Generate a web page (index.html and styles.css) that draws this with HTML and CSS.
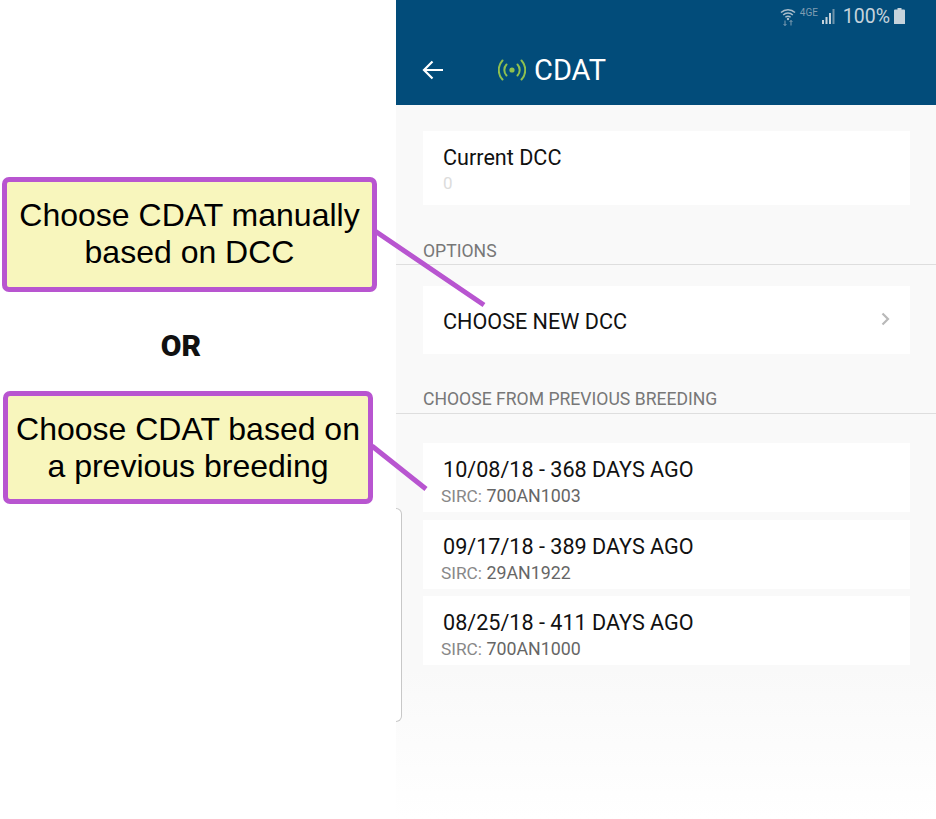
FILE: index.html

```html
<!doctype html>
<html>
<head>
    <title>CDAT</title>
    <link rel="stylesheet" href="styles.css">
</head>

<body>

<div class="page">
    <div class="notes">
        <div class="callout callout_first">Choose CDAT manually<br>based on DCC</div>
        <div class="or_label">OR</div>
        <div class="callout callout_second">Choose CDAT based on<br>a previous breeding</div>
    </div>

    <div class="phone">
        <div class="header">
            <div class="status_bar">
                <svg class="status_wifi" viewBox="0 0 16 20" width="16" height="20">
                    <path d="M1 6.500a10 10 0 0 1 14 0M3.200 9a7 7 0 0 1 9.600 0M5.400 11.300a4 4 0 0 1 5.200 0" fill="none" stroke="#a9bdcb" stroke-width="1.500"/>
                    <circle cx="8" cy="13" r="1.200" fill="#a9bdcb"/>
                    <path d="M5 14.500v5M3.600 18l1.400 1.600L6.400 18M11 19.500v-5M9.600 16l1.400-1.600L12.400 16" fill="none" stroke="#7f9db2" stroke-width="1"/>
                </svg>
                <span class="status_net">4GE</span>
                <svg class="status_signal" viewBox="0 0 16 16" width="16" height="16">
                    <rect x="1" y="12" width="2" height="4" fill="#c6d3dc"/>
                    <rect x="4.500" y="9" width="2" height="7" fill="#c6d3dc"/>
                    <rect x="8" y="5" width="2" height="11" fill="#c6d3dc"/>
                    <rect x="11.500" y="1" width="2" height="15" fill="#6f93aa"/>
                </svg>
                <span class="status_pct">100%</span>
                <svg class="status_batt" viewBox="0 0 11 16" width="11" height="16">
                    <path d="M3.500 0h4v1.500H10a1 1 0 0 1 1 1V16H0V2.500a1 1 0 0 1 1-1h2.500z" fill="#c6d3dc"/>
                </svg>
            </div>
            <div class="title_bar">
                <svg class="back_icon" viewBox="0 0 22 20" width="22" height="20">
                    <path d="M21 10H2M10.500 1.500L2 10l8.500 8.500" fill="none" stroke="#fff" stroke-width="2.200"/>
                </svg>
                <svg class="signal_icon" viewBox="0 0 28 22" width="28" height="22">
                    <circle cx="14" cy="11" r="2.600" fill="#8fc04f"/>
                    <path d="M8.500 5.500a8 8 0 0 0 0 11M19.500 5.500a8 8 0 0 1 0 11M4.500 1.500a14 14 0 0 0 0 19M23.500 1.500a14 14 0 0 1 0 19" fill="none" stroke="#8fc04f" stroke-width="2" stroke-linecap="round"/>
                </svg>
                <span class="title">CDAT</span>
            </div>
        </div>

        <div class="content">
            <div class="card card_dcc">
                <div class="card_title">Current DCC</div>
                <div class="card_zero">0</div>
            </div>

            <div class="section section_options">OPTIONS</div>
            <div class="card card_choose">
                <div class="card_title">CHOOSE NEW DCC</div>
                <svg class="chevron" viewBox="0 0 9 14" width="9" height="14">
                    <path d="M1.500 1.500L7 7l-5.500 5.500" fill="none" stroke="#b9b9b9" stroke-width="2.200"/>
                </svg>
            </div>

            <div class="section section_previous">CHOOSE FROM PREVIOUS BREEDING</div>
            <div class="breedings">
                <div class="card card_breeding">
                    <div class="card_title">10/08/18 - 368 DAYS AGO</div>
                    <div class="sirc"><span>SIRC:</span> 700AN1003</div>
                </div>
                <div class="card card_breeding">
                    <div class="card_title">09/17/18 - 389 DAYS AGO</div>
                    <div class="sirc"><span>SIRC:</span> 29AN1922</div>
                </div>
                <div class="card card_breeding">
                    <div class="card_title">08/25/18 - 411 DAYS AGO</div>
                    <div class="sirc"><span>SIRC:</span> 700AN1000</div>
                </div>
            </div>
        </div>
    </div>

    <div class="bracket"></div>

    <svg class="leaders" viewBox="0 0 936 819" width="936" height="819">
        <path d="M375 231L484 305M372 446L426 489" fill="none" stroke="#b855d0" stroke-width="5"/>
    </svg>
</div>

</body>
</html>
```

FILE: styles.css

```css
body {
    margin: 0;
    background: white;
    font-family: Roboto, sans-serif;
}

.page {
    position: relative;
    display: flex;
    width: 936px;
    height: 819px;
    overflow: hidden;
}

/* left side, the yellow notes */
.notes {
    width: 396px;
    flex: none;
    padding-top: 177px;
    box-sizing: border-box;
    position: relative;
    z-index: 3;
}

.callout {
    box-sizing: border-box;
    background: #f8f6bd;
    border: 5px solid #b855d0;
    border-radius: 7px;
    color: #000;
    font-family: "Liberation Sans", Arial, sans-serif;
    font-size: 32px;
    line-height: 37px;
    text-align: center;
    padding-top: 15px;
}

.callout_first {
    width: 375px;
    height: 115px;
    margin-left: 2px;
}

.callout_second {
    width: 370px;
    height: 113px;
    margin-left: 3px;
}

.or_label {
    width: 362px;
    height: 99px;
    line-height: 107px;
    text-align: center;
    font-family: Roboto, sans-serif;
    font-weight: 900;
    font-size: 30px;
    color: #111;
}

/* right side, the phone */
.phone {
    flex: 1;
    display: flex;
    flex-direction: column;
    background: linear-gradient(#f9f9f9 660px, #f9f9f9 670px, #ffffff 819px);
}

.header {
    height: 105px;
    background: #024c7a;
    box-sizing: border-box;
}

.status_bar {
    height: 32px;
    display: flex;
    align-items: center;
    justify-content: flex-end;
    padding-right: 31px;
}

.status_wifi {
    margin-right: 4px;
}

.status_net {
    font-size: 10px;
    color: #7f9db2;
    margin-top: -8px;
    width: 21px;
}

.status_signal {
    margin: 0 6px 0 0;
}

.status_pct {
    font-size: 19.500px;
    color: #c6d3dc;
    margin-right: 4px;
}

.title_bar {
    display: flex;
    align-items: center;
    height: 76px;
    padding-left: 26px;
}

.back_icon {
    margin-right: 54px;
}

.signal_icon {
    margin-right: 8px;
}

.title {
    font-size: 29px;
    color: #fff;
}

.content {
    padding: 26px 26px 0 27px;
}

.card {
    background: #fff;
    box-sizing: border-box;
    padding-left: 20px;
}

.card_title {
    font-size: 21.600px;
    line-height: 24px;
    color: #111;
}

.card_dcc {
    height: 74px;
    padding-top: 15px;
}

.card_zero {
    font-size: 17px;
    line-height: 20px;
    margin-top: 3px;
    color: #dcdcdc;
}

.section {
    font-size: 17.600px;
    color: #777;
    margin: 0 -26px 0 -27px;
    padding-left: 27px;
    border-bottom: 1px solid #dedede;
}

.section_options {
    margin-top: 36px;
    height: 23px;
    margin-bottom: 21px;
}

.section_previous {
    margin-top: 35px;
    height: 24px;
    margin-bottom: 29px;
}

.card_choose {
    height: 68px;
    display: flex;
    align-items: center;
    justify-content: space-between;
    padding-right: 20px;
}

.card_choose .card_title {
    margin-top: 3px;
}

.chevron {
    margin-top: -2px;
}

.breedings {
    display: flex;
    flex-direction: column;
    gap: 7.500px;
}

.card_breeding {
    height: 69px;
    padding-top: 15px;
}

.sirc {
    font-size: 17.800px;
    line-height: 20px;
    margin-top: 4px;
    color: #666;
    margin-left: -2px;
}

.sirc span {
    color: #888;
    font-size: 17.300px;
}

/* leftover rounded box edge behind the phone */
.bracket {
    position: absolute;
    left: 396px;
    top: 508px;
    width: 6px;
    height: 214px;
    box-sizing: border-box;
    border: 1px solid #c8c8c8;
    border-left: none;
    border-radius: 0 7px 7px 0;
    background: #fff;
    z-index: 1;
}

.leaders {
    position: absolute;
    left: 0;
    top: 0;
    z-index: 2;
}
```
